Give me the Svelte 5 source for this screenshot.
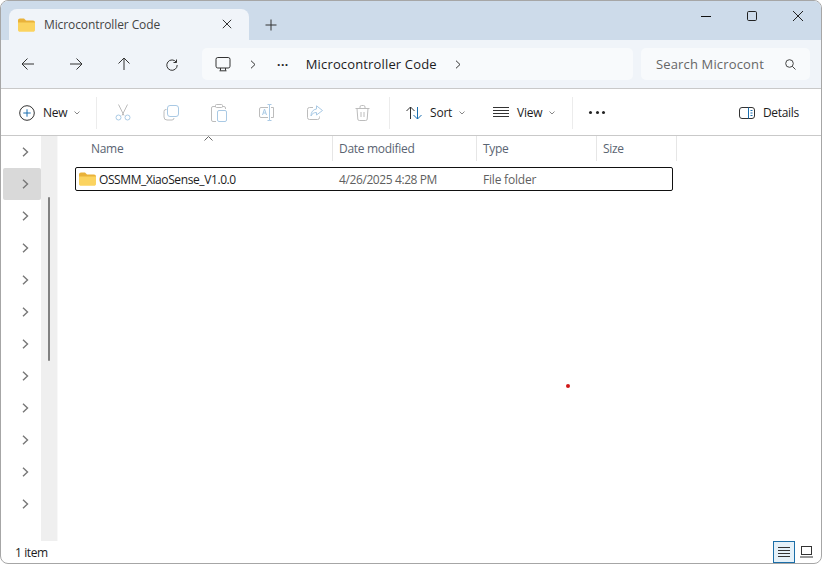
<script>
	const navRows = Array.from({ length: 12 }, (_, i) => i);
	const columns = [
		{ label: 'Name', width: 275, pad: 33 },
		{ label: 'Date modified', width: 144, pad: 6 },
		{ label: 'Type', width: 120, pad: 6 },
		{ label: 'Size', width: 80, pad: 6 }
	];
</script>

<div class="window">
	<div class="titlebar">
		<div class="tab">
			<svg class="tab-folder" width="17" height="14" viewBox="0 0 17 14">
				<path d="M0 2.500C0 1.200.8.500 2 .5h4l2 2h7c1.200 0 2 .7 2 2V5H0z" fill="#e9b23a" />
				<path d="M0 4.500h17V12c0 1.100-.8 1.800-2 1.800H2c-1.200 0-2-.7-2-1.800z" fill="#fbd35f" />
			</svg>
			<span class="tab-title">Microcontroller Code</span>
			<svg class="tab-close" width="10" height="10" viewBox="0 0 10 10">
				<path d="M.8.800l8.400 8.400M9.200.800L.8 9.200" stroke="#333" fill="none" />
			</svg>
		</div>
		<svg class="tab-add" width="12" height="12" viewBox="0 0 12 12">
			<path d="M6 .5v11M.5 6h11" stroke="#333" fill="none" />
		</svg>
		<div class="caption">
			<svg width="12" height="12" viewBox="0 0 12 12"><path d="M1 6.500h10" stroke="#111" stroke-width="1" fill="none" /></svg>
			<svg width="12" height="12" viewBox="0 0 12 12"><rect x="1.500" y="1.500" width="9" height="9" rx="1.200" stroke="#222" fill="none" /></svg>
			<svg width="12" height="12" viewBox="0 0 12 12"><path d="M1 1l10 10M11 1L1 11" stroke="#222" fill="none" /></svg>
		</div>
	</div>

	<div class="addressbar">
		<div class="nav-buttons">
			<svg width="14" height="14" viewBox="0 0 14 14"><path d="M13 7H1M6.500 1.500L1 7l5.500 5.500" stroke="#333" fill="none" /></svg>
			<svg width="14" height="14" viewBox="0 0 14 14"><path d="M1 7h12M7.500 1.500L13 7l-5.500 5.500" stroke="#333" fill="none" /></svg>
			<svg width="14" height="14" viewBox="0 0 14 14"><path d="M7 13V1M1.500 6.500L7 1l5.500 5.500" stroke="#333" fill="none" /></svg>
			<svg width="14" height="14" viewBox="0 0 14 14"><path d="M11.500 2.500v3h-3M11.300 5.200A5.200 5.200 0 1 0 12.200 8" stroke="#333" fill="none" /></svg>
		</div>
		<div class="breadcrumb">
			<svg class="pc" width="16" height="15" viewBox="0 0 16 15">
				<rect x="1" y=".5" width="14" height="10.500" rx="1.800" stroke="#333" fill="none" />
				<path d="M5.500 11v2.500M10.500 11v2.500M4.500 13.800h7" stroke="#333" fill="none" />
			</svg>
			<svg class="crumb-chev first" width="6" height="9" viewBox="0 0 6 9"><path d="M1 .7l4 3.800-4 3.800" stroke="#333" fill="none" /></svg>
			<span class="crumb-dots">···</span>
			<span class="crumb-text">Microcontroller Code</span>
			<svg class="crumb-chev" width="6" height="9" viewBox="0 0 6 9"><path d="M1 .7l4 3.800-4 3.800" stroke="#333" fill="none" /></svg>
		</div>
		<div class="search">
			<span class="search-text">Search Microcont</span>
			<svg width="11" height="11" viewBox="0 0 11 11"><circle cx="4.500" cy="4.500" r="3.800" stroke="#444" fill="none" /><path d="M7.300 7.300l3.200 3.200" stroke="#444" fill="none" /></svg>
		</div>
	</div>

	<div class="toolbar">
		<div class="tool new">
			<svg width="16" height="16" viewBox="0 0 16 16">
				<circle cx="8" cy="8" r="7.300" stroke="#333" fill="none" />
				<path d="M8 4.300v7.400M4.300 8h7.400" stroke="#1a6fb0" fill="none" />
			</svg>
			<span>New</span>
			<svg class="caret" width="6" height="4" viewBox="0 0 6 4"><path d="M.5.500L3 3 5.500.500" stroke="#888" fill="none" /></svg>
		</div>
		<div class="sep"></div>
		<div class="disabled-tools">
			<svg width="16" height="17" viewBox="0 0 16 17">
				<path d="M3.500.500l5.500 11M12.500.500L7 11.500" stroke="#bcbcbc" fill="none" />
				<circle cx="3.500" cy="13.500" r="2.500" stroke="#a9c9e4" fill="none" />
				<circle cx="12.500" cy="13.500" r="2.500" stroke="#a9c9e4" fill="none" />
			</svg>
			<svg width="16" height="16" viewBox="0 0 16 16">
				<path d="M3.500 4.500H3A2 2 0 0 0 1 6.500V12a3 3 0 0 0 3 3h5a2 2 0 0 0 2-2" stroke="#bcbcbc" fill="none" />
				<rect x="4.500" y=".5" width="11" height="11" rx="2.500" stroke="#a9c9e4" fill="none" />
			</svg>
			<svg width="16" height="18" viewBox="0 0 16 18">
				<path d="M5 2.500H2A1.500 1.500 0 0 0 .5 4v12A1.500 1.500 0 0 0 2 17.500h3M11 2.500h2A1.500 1.500 0 0 1 14.500 4v1" stroke="#bcbcbc" fill="none" />
				<rect x="4.500" y=".5" width="7" height="3" rx="1" stroke="#bcbcbc" fill="none" />
				<rect x="6.500" y="6.500" width="9" height="11" rx="1.500" stroke="#a9c9e4" fill="none" />
			</svg>
			<svg width="16" height="17" viewBox="0 0 16 17">
				<path d="M9 3.500H2A1.500 1.500 0 0 0 .5 5v7A1.500 1.500 0 0 0 2 13.500h7M12 3.500h2.500V13.500H12" stroke="#bcbcbc" fill="none" />
				<path d="M8.500.500h2v16h-2M12.500.500h-2M12.500 16.500h-2M3.500 11l2-6 2 6M4.200 9h2.600" stroke="#a9c9e4" fill="none" />
			</svg>
			<svg width="16" height="15" viewBox="0 0 16 15">
				<path d="M6 2.500H2.500a2 2 0 0 0-2 2v8a2 2 0 0 0 2 2h8a2 2 0 0 0 2-2v-1" stroke="#bcbcbc" fill="none" />
				<path d="M9.500.800l6 4.700-6 4.500V7.500C7 7.500 5 8.500 4 11c0-4 2-6.500 5.500-7z" stroke="#a9c9e4" fill="none" />
			</svg>
			<svg width="15" height="16" viewBox="0 0 15 16">
				<path d="M.5 3.500h14M5 3.500V2A1.500 1.500 0 0 1 6.500.5h2A1.500 1.500 0 0 1 10 2v1.500M2 3.500l.8 10.500a1.500 1.500 0 0 0 1.500 1.500h6.400a1.500 1.500 0 0 0 1.500-1.500l.8-10.500M6 7v5M9 7v5" stroke="#bcbcbc" fill="none" />
			</svg>
		</div>
		<div class="sep"></div>
		<div class="tool sort">
			<svg width="16" height="14" viewBox="0 0 16 14">
				<path d="M4.500 13V1M.5 5l4-4 4 4" stroke="#333" fill="none" />
				<path d="M11.500 1v12M7.500 9l4 4 4-4" stroke="#1a6fb0" fill="none" />
			</svg>
			<span>Sort</span>
			<svg class="caret" width="6" height="4" viewBox="0 0 6 4"><path d="M.5.500L3 3 5.500.500" stroke="#888" fill="none" /></svg>
		</div>
		<div class="tool view">
			<svg width="16" height="11" viewBox="0 0 16 11">
				<path d="M0 .5h16M0 3.500h16M0 6.500h16M0 9.500h16" stroke="#333" fill="none" />
			</svg>
			<span>View</span>
			<svg class="caret" width="6" height="4" viewBox="0 0 6 4"><path d="M.5.500L3 3 5.500.500" stroke="#888" fill="none" /></svg>
		</div>
		<div class="sep"></div>
		<div class="more"><i></i><i></i><i></i></div>
		<div class="tool details">
			<svg width="16" height="12" viewBox="0 0 16 12">
				<rect x=".5" y=".5" width="15" height="11" rx="2.500" stroke="#333" fill="none" />
				<path d="M9.500.500v11M11.500 3.500h2M11.500 6h2M11.500 8.500h2" stroke="#1a6fb0" fill="none" />
			</svg>
			<span>Details</span>
		</div>
	</div>

	<div class="main">
		<div class="navpane">
			{#each navRows as row}
				<div class="nav-row" class:selected={row === 1}>
					<svg width="7" height="10" viewBox="0 0 7 10"><path d="M1 .8L5.500 5 1 9.200" stroke="#777" stroke-width="1.400" fill="none" /></svg>
				</div>
			{/each}
		</div>
		<div class="nav-scroll"><div class="nav-thumb"></div></div>
		<div class="content">
			<div class="header">
				{#each columns as col}
					<div class="col" style="width: {col.width}px; padding-left: {col.pad}px">{col.label}</div>
				{/each}
				<svg class="sort-arrow" width="9" height="5" viewBox="0 0 9 5"><path d="M.5 4.500l4-4 4 4" stroke="#666" fill="none" /></svg>
			</div>
			<div class="file-row">
				<div class="file-name">
					<svg width="17" height="14" viewBox="0 0 17 14">
						<path d="M0 2.500C0 1.200.8.500 2 .5h4l2 2h7c1.200 0 2 .7 2 2V5H0z" fill="#e9b23a" />
						<path d="M0 4.500h17V12c0 1.100-.8 1.800-2 1.800H2c-1.200 0-2-.7-2-1.800z" fill="#fbd35f" />
					</svg>
					<span>OSSMM_XiaoSense_V1.0.0</span>
				</div>
				<div class="file-date">4/26/2025 4:28 PM</div>
				<div class="file-type">File folder</div>
			</div>
		</div>
	</div>

	<div class="statusbar">
		<span>1 item</span>
		<div class="view-toggle">
			<div class="list-btn">
				<svg width="12" height="11" viewBox="0 0 12 11"><path d="M0 .5h12M0 3.500h12M0 6.500h12M0 9.500h12" stroke="#333" fill="none" /></svg>
			</div>
			<svg width="13" height="12" viewBox="0 0 13 12"><rect x="1.500" y=".5" width="10" height="8" stroke="#333" fill="none" /><path d="M0 11h13" stroke="#333" fill="none" /></svg>
		</div>
	</div>

	<div class="red-dot"></div>
</div>

<style>
	:global(body) {
		margin: 0;
		background: #fff;
	}

	.window {
		position: relative;
		box-sizing: border-box;
		width: 822px;
		height: 564px;
		display: flex;
		flex-direction: column;
		overflow: hidden;
		border: 1px solid #a6a6a6;
		border-radius: 8px;
		background: #fff;
		font-family: 'Open Sans', 'Noto Sans', sans-serif;
		font-size: 12px;
		color: #1c1c1c;
	}

	svg {
		display: block;
		flex: none;
	}

	.titlebar {
		height: 39px;
		flex: none;
		box-sizing: border-box;
		display: flex;
		align-items: flex-end;
		padding-left: 8px;
		background: #cddbea;
	}

	.tab {
		width: 240px;
		height: 31px;
		box-sizing: border-box;
		display: flex;
		align-items: center;
		padding: 0 17px 0 9px;
		background: #f0f4f9;
		border-radius: 8px 8px 0 0;
	}

	.tab-title {
		flex: 1;
		margin-left: 9px;
		color: #444;
		letter-spacing: -0.1px;
	}

	.tab-close {
		margin-bottom: 2px;
	}

	.tab-add {
		margin: 0 0 9px 16px;
	}

	.caption {
		margin-left: auto;
		display: flex;
		gap: 34px;
		align-self: flex-start;
		padding: 9px 17px 0 0;
	}

	.addressbar {
		height: 49px;
		flex: none;
		box-sizing: border-box;
		display: flex;
		align-items: center;
		background: #f0f4f9;
		border-bottom: 1px solid #c9c9c9;
	}

	.nav-buttons {
		width: 201px;
		box-sizing: border-box;
		display: flex;
		gap: 34px;
		padding-left: 20px;
	}

	.breadcrumb {
		width: 431px;
		height: 32px;
		box-sizing: border-box;
		display: flex;
		align-items: center;
		padding-left: 13px;
		background: #f8fafc;
		border-radius: 5px;
	}

	.crumb-chev.first {
		margin-left: 19px;
	}

	.crumb-dots {
		margin-left: 21px;
		font-weight: 700;
		letter-spacing: 0.5px;
	}

	.crumb-text {
		margin: 0 18px 0 17px;
		font-size: 13px;
		letter-spacing: 0.15px;
	}

	.search {
		width: 169px;
		height: 32px;
		margin-left: 8px;
		box-sizing: border-box;
		display: flex;
		align-items: center;
		justify-content: space-between;
		padding: 0 14px 0 15px;
		background: #f8fafc;
		border-radius: 5px;
	}

	.search-text {
		width: 109px;
		overflow: hidden;
		white-space: nowrap;
		font-size: 13px;
		letter-spacing: 0.15px;
		color: #666;
	}

	.toolbar {
		height: 47px;
		flex: none;
		box-sizing: border-box;
		display: flex;
		align-items: center;
		padding: 1px 0 0 18px;
		border-bottom: 1px solid #c9c9c9;
	}

	.tool {
		display: flex;
		align-items: center;
		letter-spacing: -0.2px;
	}

	.tool span {
		margin-left: 8px;
	}

	.caret {
		margin-left: 7px;
	}

	.new {
		width: 77px;
	}

	.sep {
		width: 1px;
		height: 32px;
		background: #ececec;
	}

	.disabled-tools {
		width: 292px;
		box-sizing: border-box;
		display: flex;
		align-items: center;
		gap: 32px;
		padding-left: 18px;
	}

	.sort {
		width: 87px;
		margin-left: 16px;
	}

	.view {
		width: 79px;
	}

	.more {
		display: flex;
		gap: 3.500px;
		margin-left: 16px;
	}

	.more i {
		width: 3px;
		height: 3px;
		border-radius: 50%;
		background: #222;
	}

	.details {
		margin-left: auto;
		padding-right: 22px;
		letter-spacing: -0.3px;
	}

	.main {
		flex: 1;
		min-height: 0;
		display: flex;
	}

	.navpane {
		width: 40px;
		flex: none;
	}

	.nav-row {
		height: 32px;
		margin-left: 2px;
		padding-left: 6px;
		display: flex;
		align-items: center;
		justify-content: center;
	}

	.nav-row.selected {
		background: #d9d9d9;
		border-radius: 2px;
	}

	.nav-scroll {
		width: 17px;
		flex: none;
		box-sizing: border-box;
		padding: 61px 0 0 7px;
		background: #efefef;
		border-right: 1px solid #f8f8f8;
	}

	.nav-thumb {
		width: 2px;
		height: 164px;
		background: #808080;
		border-radius: 1px;
	}

	.content {
		flex: 1;
		min-width: 0;
		position: relative;
	}

	.header {
		height: 25px;
		display: flex;
	}

	.col {
		box-sizing: border-box;
		height: 25px;
		line-height: 26px;
		color: #5a6472;
		letter-spacing: -0.3px;
		border-right: 1px solid #e6e6e6;
	}

	.sort-arrow {
		position: absolute;
		left: 146px;
		top: 0;
	}

	.file-row {
		width: 598px;
		height: 24px;
		margin: 6px 0 0 17px;
		box-sizing: border-box;
		display: flex;
		align-items: center;
		border: 1px solid #111;
		border-radius: 2px;
		padding-left: 3px;
		letter-spacing: -0.4px;
	}

	.file-name {
		width: 260px;
		display: flex;
		align-items: center;
		gap: 3px;
	}

	.file-date {
		width: 144px;
		color: #5f5f5f;
	}

	.file-type {
		color: #5f5f5f;
		letter-spacing: -0.2px;
	}

	.statusbar {
		height: 22px;
		flex: none;
		display: flex;
		align-items: center;
		justify-content: space-between;
		padding: 0 8px 0 14px;
		letter-spacing: -0.4px;
	}

	.view-toggle {
		display: flex;
		align-items: center;
		gap: 5px;
	}

	.list-btn {
		width: 22px;
		height: 22px;
		box-sizing: border-box;
		display: flex;
		align-items: center;
		justify-content: center;
		border: 1px solid #1b6ea8;
		background: #e5f1f9;
	}

	.red-dot {
		position: absolute;
		left: 565px;
		top: 383px;
		width: 4px;
		height: 4px;
		border-radius: 50%;
		background: #d01818;
	}
</style>
